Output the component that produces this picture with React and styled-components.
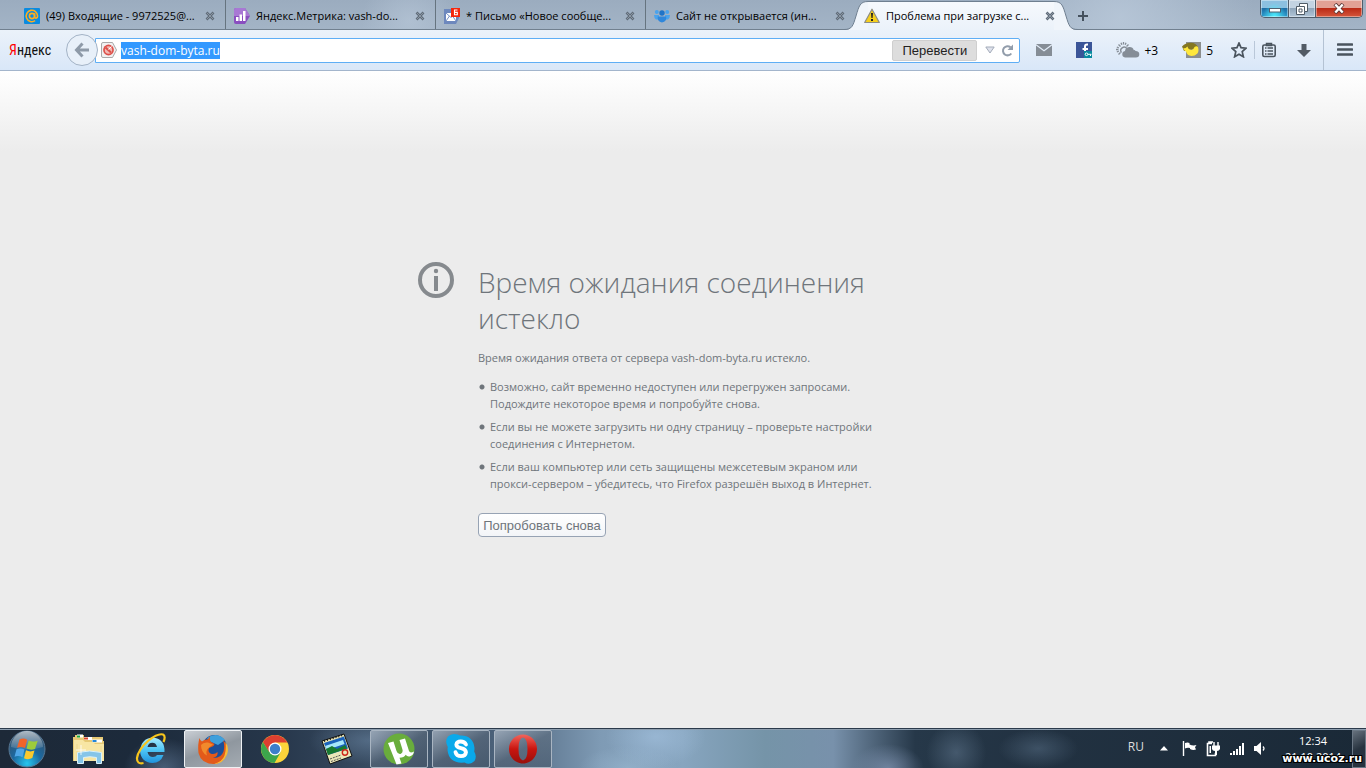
import React, { useEffect, useRef } from 'react';
import styled, { createGlobalStyle } from 'styled-components';

const GlobalStyle = createGlobalStyle`
    *{
        box-sizing: border-box;
    }
    body{
        margin: 0;
        font-family: "Open Sans", "Noto Sans", sans-serif;
        font-size: 12px;
        color: #000000;
    }
    button{
        border: 0;
        padding: 0;
        background: none;
        font: inherit;
        color: inherit;
    }
    svg{
        display: block;
        flex: none;
    }
`;

/* ---------- favicons ---------- */

const MailRuIcon = () => (
    <svg width="16" height="16" viewBox="0 0 16 16">
        <rect width="16" height="16" rx="1" fill="#0a8be0"/>
        <g fill="none" stroke="#ffad1f" strokeWidth="1.6">
            <circle cx="8" cy="8" r="2.6"/>
            <path d="M10.600 5.300v3.500c0 2 3 1.800 3-.9a5.700 5.700 0 1 0-2.500 4.800"/>
        </g>
    </svg>
);

const MetrikaIcon = () => (
    <svg width="16" height="16" viewBox="0 0 16 16">
        <path d="M2 0h9l5 8-5 8H2a2 2 0 0 1-2-2V2a2 2 0 0 1 2-2z" fill="#8a4fc0"/>
        <path d="M2 0h9l5 8H0V2a2 2 0 0 1 2-2z" fill="#a878d4"/>
        <path d="M2 9h2.500v4H2zM5.500 6.500H8V13H5.500zM9 3h2.500v10H9z" fill="#ffffff"/>
    </svg>
);

const LetterIcon = () => (
    <svg width="16" height="16" viewBox="0 0 16 16">
        <path d="M0 1h13l2 2v7l-3 6H0z" fill="#6d88bd"/>
        <path d="M2 5h10v8H2z" fill="#ffffff"/>
        <path d="M2 5l5 4.500L12 5M2 13l3.500-5M12 13L8.500 8" fill="none" stroke="#7590c4"/>
        <rect x="7" width="9" height="9" fill="#f5260c"/>
        <path d="M13.500 2h-3v4.800h2.800V4.400h-2.500" fill="none" stroke="#ffffff" strokeWidth="1.100"/>
    </svg>
);

const PeopleIcon = () => (
    <svg width="16" height="14" viewBox="0 0 16 14">
        <g fill="#4aa3ec">
            <circle cx="2.800" cy="3" r="2"/>
            <circle cx="13.200" cy="3" r="2"/>
            <path d="M0 6h5v4.500H2Q0 9 0 6zM16 6h-5v4.500h3q2-1.500 2-4.500z"/>
        </g>
        <circle cx="8" cy="4" r="2.700" fill="#1f74c8"/>
        <path d="M3.800 7.500h8.400q.8 5-4.200 6-5-1-4.200-6z" fill="#2f87db"/>
    </svg>
);

const WarningIcon = () => (
    <svg width="16" height="16" viewBox="0 0 16 16">
        <path d="M8 1.200L15.300 14.500H.7z" fill="#f6cf1c" stroke="#8d8d86" strokeWidth="1.200" strokeLinejoin="round"/>
        <path d="M7 5h2l-.4 5H7.400zM7 11h2v2H7z" fill="#222222"/>
    </svg>
);

const CloseIcon = () => (
    <svg width="10" height="10" viewBox="0 0 10 10">
        <path d="M1.500 1.500l7 7M8.500 1.500l-7 7" stroke="#5f6b78" strokeWidth="2.600"/>
        <path d="M2 2l6 6M8 2L2 8" stroke="#8b97a4" strokeWidth="1"/>
    </svg>
);

/* ---------- toolbar icons ---------- */

const BackIcon = () => (
    <svg width="16" height="16" viewBox="0 0 16 16">
        <path d="M8.500 1.500L2.500 8l6 6.500M3 8h12" fill="none" stroke="#8e9aa8" strokeWidth="3"/>
    </svg>
);

const BlockedIcon = () => (
    <svg width="16" height="16" viewBox="0 0 16 16">
        <path d="M2 .5h9.500l4 7.500-4 7.500H2A1.500 1.500 0 0 1 .5 14V2A1.500 1.500 0 0 1 2 .5z" fill="#f1f1f1" stroke="#a9a9a9"/>
        <circle cx="7.500" cy="8" r="5.400" fill="#dd4f48"/>
        <circle cx="7.500" cy="8" r="3.700" fill="#f2b9b4"/>
        <path d="M4.500 5.500l5.500 5" stroke="#dd4f48" strokeWidth="2"/>
        <path d="M7.500 7.500l3-3" stroke="#ffffff"/>
    </svg>
);

const ReloadIcon = () => (
    <svg width="13" height="13" viewBox="0 0 13 13">
        <path d="M10.300 9.500A4.600 4.600 0 1 1 9.500 3.200" fill="none" stroke="#929dab" strokeWidth="2"/>
        <path d="M12 .5V6H6.500z" fill="#929dab"/>
    </svg>
);

const EnvelopeIcon = () => (
    <svg width="16" height="12" viewBox="0 0 16 12">
        <path d="M0 0h16L8 6zM0 1.500l8 6 8-6V12H0z" fill="#858d96"/>
    </svg>
);

const FacebookIcon = () => (
    <svg width="16" height="16" viewBox="0 0 16 16">
        <rect width="16" height="16" fill="#3b5598"/>
        <path d="M12 2.500h-1q-2 0-2 2V13M6.500 7H12" fill="none" stroke="#ffffff" strokeWidth="2"/>
        <path d="M8 9h8v7H8z" fill="#088ba0"/>
        <circle cx="10.500" cy="12.300" r="1.300" fill="none" stroke="#ffffff"/>
        <path d="M12 12.300h3.500M14.500 12.500V14" stroke="#ffffff"/>
    </svg>
);

const WeatherIcon = () => (
    <svg width="24" height="16" viewBox="0 0 24 16">
        <g stroke="#858d96" strokeWidth="1.300">
            <path d="M7.500 0v2.500M2.500 2.500l2 2M0 7.500h2.500M2.500 12.500l2-2M12.500 2.500l-2 2M5 .8l.8 2M10 .8l-.8 2M.8 5l2 .8M.8 10l2-.8" fill="none"/>
        </g>
        <path d="M5.500 10.500a3.300 3.300 0 1 1 5.300-4" fill="none" stroke="#858d96" strokeWidth="1.400"/>
        <path d="M9 15.500a3.300 3.300 0 0 1 0-6.500 4.500 4.500 0 0 1 8.800-.8q1-.5 1.800.8 3.700.2 3.700 3.200 0 3.300-3.500 3.300z" fill="#858d96"/>
    </svg>
);

const TrafficIcon = () => (
    <svg width="20" height="16" viewBox="0 0 20 16">
        <rect x="4" width="15" height="16" fill="#8c8f8e"/>
        <path d="M0 4.500Q4 .5 9 .8 14 1 16 5l-5 2-9 2z" fill="#847722"/>
        <path d="M1 6.500q3 0 4.500-2 .5 3 4 3.500 2 0 3-3 2-1.500 3.500 0 1.200 4-.6 6.500Q13 14 9.500 14 5 13.500 4 9.500 2.500 8.500 1 6.500z" fill="#ffe83b"/>
    </svg>
);

const StarIcon = () => (
    <svg width="16" height="16" viewBox="0 0 16 16">
        <path d="M8 1l2 4.700 5 .5-3.800 3.400 1.200 5.200L8 12.200l-4.400 2.600 1.200-5.200L1 6.200l5-.5z" fill="none" stroke="#4a545e" strokeWidth="1.700" strokeLinejoin="miter"/>
    </svg>
);

const ClipboardIcon = () => (
    <svg width="14" height="16" viewBox="0 0 14 16">
        <path d="M4.500 1.500h5v2h-5z" fill="none" stroke="#4a545e" strokeWidth="1.500"/>
        <rect x=".8" y="3" width="12.400" height="11.500" rx="1.500" fill="none" stroke="#4a545e" strokeWidth="1.600"/>
        <path d="M3 6h1.500M5.500 6H11M3 9h1.500M5.500 9H11M3 12h1.500M5.500 12H11" stroke="#4a545e" strokeWidth="1.300"/>
    </svg>
);

const DownloadIcon = () => (
    <svg width="14" height="15" viewBox="0 0 14 15">
        <path d="M4.500 1h5v6H14l-7 7-7-7h4.500z" fill="#525b65"/>
    </svg>
);

const MenuIcon = () => (
    <svg width="16" height="14" viewBox="0 0 16 14">
        <path d="M1 1.500h14M1 6.500h14M1 11.500h14" stroke="#4a545e" strokeWidth="2.600" strokeLinecap="round"/>
    </svg>
);

const InfoIcon = () => (
    <svg width="36" height="36" viewBox="0 0 36 36">
        <circle cx="18" cy="18" r="16" fill="none" stroke="#868a8e" strokeWidth="4"/>
        <circle cx="18" cy="9" r="2.200" fill="#868a8e"/>
        <path d="M16 14h4v15h-4z" fill="#868a8e"/>
    </svg>
);

/* ---------- taskbar icons ---------- */

const StartOrb = () => (
    <svg width="38" height="38" viewBox="0 0 38 38">
        <defs>
            <radialGradient id="orb" cx=".5" cy=".9" r=".8">
                <stop offset="0" stopColor="#27c6ee"/>
                <stop offset=".5" stopColor="#1c69a0"/>
                <stop offset="1" stopColor="#33536f"/>
            </radialGradient>
            <linearGradient id="orbShine" x2="0" y2="1">
                <stop offset="0" stopColor="#ffffff" stopOpacity=".6"/>
                <stop offset="1" stopColor="#ffffff" stopOpacity=".1"/>
            </linearGradient>
        </defs>
        <circle cx="19" cy="19" r="18" fill="url(#orb)" stroke="#587894"/>
        <path d="M3 17a16 16 0 0 1 32 0q-16 5-32 0z" fill="url(#orbShine)"/>
        <path d="M11.500 9.500q4-2 7.700.3L17 18q-4-2-8-.3z" fill="#f0642a"/>
        <path d="M20.700 10.500q4 2 9 .2L27 19q-4.500 1.500-8.500-.5z" fill="#9ccb3b"/>
        <path d="M8.500 19.300q4.300-1.600 8 .2l-2 7.800q-4-2.200-8-.5z" fill="#4fa6e6"/>
        <path d="M18 20.300q4 2 8.500.3L24.300 28q-4.300 2.200-8.300.2z" fill="#fbc92d"/>
    </svg>
);

const ExplorerIcon = () => (
    <svg width="34" height="32" viewBox="0 0 34 32">
        <path d="M1 4h2V2h9v2h19v4h1v20H1z" fill="#e6c975"/>
        <path d="M5 1.500h6v3H5z" fill="#ffffff"/><path d="M5 2.500h3v2H5z" fill="#19a63a"/>
        <path d="M12 4h8v3h-8z" fill="#ffffff"/><path d="M12 4.500h4v2h-4z" fill="#d8452b"/>
        <path d="M20 6.500h10v3H20z" fill="#ffffff"/><path d="M20.500 7h4v2h-4z" fill="#2286d8"/>
        <path d="M2 7h9l2 2h8l2 2h9v17H2z" fill="#f8e6a4"/>
        <path d="M5 11v16M29 13v14" stroke="#eed890"/>
        <path d="M5.500 19.500q12-3 24 0v11h-5v-6q-6.500-1.500-13 0v6h-6z" fill="#86c5e8" stroke="#d9f1fb"/>
        <path d="M9 12v10M4 17h10" stroke="#ffffff" strokeWidth=".8"/>
    </svg>
);

const IeIcon = () => (
    <svg width="32" height="32" viewBox="0 0 32 32">
        <defs>
            <linearGradient id="ie" x2="0" y2="1">
                <stop offset="0" stopColor="#a9ebff"/>
                <stop offset=".5" stopColor="#4dc5f5"/>
                <stop offset="1" stopColor="#1f92dd"/>
            </linearGradient>
        </defs>
        <path d="M29.500 19H12.500q1 5 5.500 5 3 0 4-2h6.500q-3 8-11 8Q6 29.500 5 18 6 5.500 17.500 4.500 30 5.500 29.500 19zm-7.500-5q-.8-4.300-4.700-4.300T12.500 14z" fill="url(#ie)"/>
        <path d="M28.500 9Q31 3 28 1.500 23 0 13.500 7.500 3 17 2 25q-.3 6.500 6.500 5" fill="none" stroke="#f8c51c" strokeWidth="2.200"/>
    </svg>
);

const FirefoxIcon = () => (
    <svg width="32" height="32" viewBox="0 0 32 32">
        <circle cx="17.500" cy="14.500" r="12.500" fill="#1c4f99"/>
        <path d="M10 5Q20-2 28 7l-7 5-9-4z" fill="#3fa0dc"/>
        <path d="M2.500 5q.5 2.500 2.500 3.500Q8 6 10.500 6.500L13 3.500q-.5 3 .5 5l4 2.500-1 2-4.500 2q-1.500 3.500 1.500 5.500 4 1.500 7-1.500 1 4.500-4.500 6 8 .5 10.500-6.500 1.500-6-.5-11.500 5 5 4 12.500-2.500 11-13.500 11.500Q4 30.500 1.500 20 .5 11.500 2.500 5z" fill="#e35a1a"/>
        <path d="M28.500 8.500q4 7 1.500 13Q26 31 17 31q8.500-2.500 10.500-8.500 2-6 1-14z" fill="#f8bb36"/>
        <path d="M4 12q2-3 7-2.500l5 2-4 3q-4 3.500-2 8-6-3-6-10.500z" fill="#f18a2c"/>
    </svg>
);

const ChromeIcon = () => (
    <svg width="28" height="28" viewBox="0 0 28 28">
        <circle cx="14" cy="14" r="14" fill="#fbd43a"/>
        <path d="M14 7.500h12.400L26.100 7A14 14 0 0 0 1.900 7L8 17z" fill="#dd3f30"/>
        <path d="M1.900 7A14 14 0 0 0 13.500 28l6-10.500L8.200 17z" fill="#3da64c"/>
        <circle cx="14" cy="14" r="6.500" fill="#ffffff"/>
        <circle cx="14" cy="14" r="5.200" fill="#3d7fcb"/>
    </svg>
);

const PhotoIcon = () => (
    <svg width="32" height="32" viewBox="0 0 32 32">
        <path d="M1 8L23 1l8 22-22 8z" fill="#ece8b8" stroke="#111111"/>
        <path d="M3 10l20-6.500 4 12L7 22z" fill="#1a62ba"/>
        <path d="M4 13l18-6 1.500 4-9 3-9 2z" fill="#a6e6fa"/>
        <path d="M5 16l6-3 5 3 8-4 2 3.500L7 22z" fill="#197a30"/>
        <path d="M9 26l11-4M10 28.500L20 25" stroke="#555555" strokeDasharray="2 1"/>
        <circle cx="24" cy="19.500" r="2.700" fill="none" stroke="#cc2418" strokeWidth="1.400"/>
        <path d="M3 8l19-6" stroke="#111111" strokeWidth="2" strokeDasharray="1 2"/>
    </svg>
);

const TorrentIcon = () => (
    <svg width="32" height="32" viewBox="0 0 32 32">
        <circle cx="16" cy="16" r="15.500" fill="#69ad3c"/>
        <path d="M5 10l5.500-1.500 3 9.500q1.200 3.500 4 3 3-1 1.800-5L16.500 7 22 5.500l4 12.500q1 2.500 5 .500-.5 4-4.500 5-2.500.3-3.800-1.700-1.500 3-6.200 3l2 5.700-5 1z" fill="#ffffff"/>
    </svg>
);

const SkypeIcon = () => (
    <svg width="32" height="32" viewBox="0 0 32 32">
        <path d="M9 1q4 0 6 1.500Q28 2 29.500 15q0 2-.3 3.500 3 5 .3 9.500-4.500 4.500-10 1.500Q4 31 2.500 17q0-2 .3-3Q-.5 8 3 3.500 5.500 1 9 1z" fill="#0aa9ea"/>
        <path d="M21 11.500Q19.500 8.500 15.700 8.500t-4.400 3q0 2.700 4.700 3.700t5 4q-.5 4-5 4t-5.500-4" fill="none" stroke="#ffffff" strokeWidth="3.800" strokeLinecap="round"/>
    </svg>
);

const OperaIcon = () => (
    <svg width="30" height="32" viewBox="0 0 30 32">
        <defs>
            <linearGradient id="opera" x2="0" y2="1">
                <stop offset="0" stopColor="#f1655c"/>
                <stop offset=".5" stopColor="#c9150f"/>
                <stop offset="1" stopColor="#98100c"/>
            </linearGradient>
        </defs>
        <path fillRule="evenodd" d="M15 1.500C23 1.500 29 8 29 16s-6 14.500-14 14.500S1 24 1 16 7 1.500 15 1.500zm0 3q-4.500 1-4.500 11.500T15 27.500q4.500-1 4.500-11.500T15 4.500z" fill="url(#opera)"/>
    </svg>
);

/* ---------- tray icons ---------- */

const CaretUpIcon = () => (
    <svg width="8" height="5" viewBox="0 0 8 5"><path d="M4 0l4 4.500H0z" fill="#ffffff"/></svg>
);

const FlagIcon = () => (
    <svg width="15" height="15" viewBox="0 0 15 15">
        <path d="M1.500 0v15" stroke="#ffffff" strokeWidth="1.400"/>
        <path d="M3 2q2.500-1 4.500 0v1.500q3.500 1.500 7 .5l-1.500 2.300L14 8.500q-3 1-6-.5V7Q5 6.500 3 7.500z" fill="#ffffff"/>
    </svg>
);

const PowerIcon = () => (
    <svg width="15" height="16" viewBox="0 0 15 16">
        <path d="M6 2.500H1.500v12h8V12M3 2.500V1h4" fill="none" stroke="#ffffff" strokeWidth="1.600"/>
        <path d="M3.500 5H5v7H3.500z" fill="#ffffff"/>
        <path d="M8 1v4M12 1v4" stroke="#ffffff" strokeWidth="1.400"/>
        <path d="M6 4.500h8V8q-1 2-3 2v4H9v-4Q6.500 10 6 8z" fill="#ffffff"/>
    </svg>
);

const SignalIcon = () => (
    <svg width="15" height="12" viewBox="0 0 15 12">
        <path d="M0 10h2v2H0zM3 8h2v4H3zM6 6h2v6H6zM9 3h2v9H9zM12 0h2v12h-2z" fill="#ffffff"/>
    </svg>
);

const SpeakerIcon = () => (
    <svg width="12" height="13" viewBox="0 0 12 13">
        <path d="M0 4h2.500L7 0v13L2.500 9H0z" fill="#ffffff"/>
        <path d="M9 4.500q2 2 0 4" fill="none" stroke="#ffffff" strokeWidth="1.200"/>
    </svg>
);

/* ---------- data ---------- */

const tabs = [
    { title: '(49) Входящие - 9972525@...', icon: <MailRuIcon/> },
    { title: 'Яндекс.Метрика: vash-do...', icon: <MetrikaIcon/> },
    { title: '* Письмо «Новое сообще...', icon: <LetterIcon/> },
    { title: 'Сайт не открывается (ин...', icon: <PeopleIcon/> },
    { title: 'Проблема при загрузке с...', icon: <WarningIcon/>, active: true },
];

const apps = [
    { name: 'Проводник', icon: <ExplorerIcon/> },
    { name: 'Internet Explorer', icon: <IeIcon/> },
    { name: 'Firefox', icon: <FirefoxIcon/>, state: 'active' },
    { name: 'Chrome', icon: <ChromeIcon/> },
    { name: 'Фото', icon: <PhotoIcon/> },
    { name: 'uTorrent', icon: <TorrentIcon/>, state: 'open' },
    { name: 'Skype', icon: <SkypeIcon/>, state: 'open' },
    { name: 'Opera', icon: <OperaIcon/>, state: 'open' },
];

function App() {
    const urlRef = useRef(null);

    useEffect(() => {
        urlRef.current.focus();
        urlRef.current.select();
    }, []);

    return (
        <Screen>
            <GlobalStyle/>
            <TabStrip>
                <TabList>
                    {tabs.map((tab, index) => (
                        <Tab key={tab.title} $active={tab.active} $divided={index < 3}>
                            {tab.active && <TabShape/>}
                            <TabIcon>{tab.icon}</TabIcon>
                            <TabTitle>{tab.title}</TabTitle>
                            <TabClose aria-label="Закрыть вкладку"><CloseIcon/></TabClose>
                        </Tab>
                    ))}
                    <NewTab aria-label="Новая вкладка">
                        <svg width="12" height="12" viewBox="0 0 12 12">
                            <path d="M6 1v10M1 6h10" stroke="#45515e" strokeWidth="2"/>
                        </svg>
                    </NewTab>
                </TabList>
                <WindowControls>
                    <WindowButton aria-label="Свернуть" $kind="min">
                        <svg width="12" height="6" viewBox="0 0 12 6">
                            <rect x=".5" y="1.500" width="11" height="3.500" fill="#ffffff" stroke="#51606e"/>
                        </svg>
                    </WindowButton>
                    <WindowButton aria-label="Развернуть">
                        <svg width="12" height="12" viewBox="0 0 12 12">
                            <path d="M3.500.5h8v8h-3v3h-8v-8h3z" fill="#ffffff" stroke="#4f5b66"/>
                            <path d="M3.500 3.500h5v5M3 6h3v3H3z" fill="none" stroke="#4f5b66"/>
                        </svg>
                    </WindowButton>
                    <WindowButton aria-label="Закрыть" $kind="close">
                        <svg width="12" height="11" viewBox="0 0 12 11">
                            <path d="M2 1l8 9M10 1L2 10" stroke="#5d3836" strokeWidth="4"/>
                            <path d="M2.300 1.500l7.400 8M9.700 1.500l-7.400 8" stroke="#ffffff" strokeWidth="2.400"/>
                        </svg>
                    </WindowButton>
                </WindowControls>
            </TabStrip>

            <Toolbar>
                <YandexLogo href="#"><span>Я</span>ндекс</YandexLogo>
                <BackButton aria-label="Назад"><BackIcon/></BackButton>
                <UrlBar>
                    <BlockedIcon/>
                    <UrlInput ref={urlRef} aria-label="Адрес" defaultValue="vash-dom-byta.ru" spellCheck="false"/>
                    <TranslateButton>Перевести</TranslateButton>
                    <UrlActions>
                        <button aria-label="История">
                            <svg width="10" height="8" viewBox="0 0 10 8">
                                <path d="M.8 1h8.400L5 7z" fill="#dfe2ec" stroke="#a3abb9"/>
                            </svg>
                        </button>
                        <button aria-label="Обновить"><ReloadIcon/></button>
                    </UrlActions>
                </UrlBar>
                <Addons>
                    <button aria-label="Почта"><EnvelopeIcon/></button>
                    <button aria-label="Facebook"><FacebookIcon/></button>
                    <AddonButton><WeatherIcon/>+3</AddonButton>
                    <AddonButton><TrafficIcon/>5</AddonButton>
                </Addons>
                <Bookmarks>
                    <button aria-label="В закладки"><StarIcon/></button>
                    <ThinLine/>
                    <button aria-label="Закладки"><ClipboardIcon/></button>
                </Bookmarks>
                <DownloadButton aria-label="Загрузки"><DownloadIcon/></DownloadButton>
                <MenuButton aria-label="Меню"><MenuIcon/></MenuButton>
            </Toolbar>

            <Page>
                <ErrorBox>
                    <InfoIcon/>
                    <ErrorBody>
                        <Title>Время ожидания соединения истекло</Title>
                        <Lead>Время ожидания ответа от сервера vash-dom-byta.ru истекло.</Lead>
                        <Hints>
                            <li>Возможно, сайт временно недоступен или перегружен запросами.<br/>Подождите некоторое время и попробуйте снова.</li>
                            <li>Если вы не можете загрузить ни одну страницу – проверьте настройки<br/>соединения с Интернетом.</li>
                            <li>Если ваш компьютер или сеть защищены межсетевым экраном или<br/>прокси-сервером – убедитесь, что Firefox разрешён выход в Интернет.</li>
                        </Hints>
                        <RetryButton>Попробовать снова</RetryButton>
                    </ErrorBody>
                </ErrorBox>
            </Page>

            <Taskbar>
                <StartButton aria-label="Пуск"><StartOrb/></StartButton>
                <AppList>
                    {apps.map((app) => (
                        <AppButton key={app.name} aria-label={app.name} $state={app.state}>{app.icon}</AppButton>
                    ))}
                </AppList>
                <Tray>
                    <Language>RU</Language>
                    <CaretUpIcon/>
                    <TrayIcons>
                        <FlagIcon/>
                        <PowerIcon/>
                        <SignalIcon/>
                        <SpeakerIcon/>
                    </TrayIcons>
                    <Clock>
                        <span>12:34</span>
                        <span>21.10.2014</span>
                    </Clock>
                    <ShowDesktop aria-label="Показать рабочий стол"/>
                </Tray>
                <Watermark>www.ucoz.ru</Watermark>
            </Taskbar>
        </Screen>
    );
}

export default App;

const Screen = styled.div`
    min-height: 100vh;
    display: flex;
    flex-direction: column;
`;

const TabStrip = styled.div`
    display: flex;
    justify-content: space-between;
    height: 30px;
    padding: 0 3px 0 16px;
    border-bottom: 1px solid #71808f;
    background:
        radial-gradient(circle at 82% 60%, rgba(190, 205, 222, .7), transparent 12%),
        radial-gradient(circle at 30% 70%, rgba(190, 205, 222, .5), transparent 5%),
        linear-gradient(#9bacbf, #a3b4c6);
`;

const TabList = styled.div`
    display: flex;
    flex: 1;
    min-width: 0;
`;

const Tab = styled.div`
    position: relative;
    display: flex;
    align-items: center;
    flex: 0 1 210px;
    min-width: 0;
    height: ${({ $active }) => ($active ? '30px' : '29px')};
    padding: 2px 10px 0 8px;
    z-index: ${({ $active }) => ($active ? 1 : 0)};
    border-right: 1px solid ${({ $divided }) => ($divided ? '#66747f' : 'transparent')};
`;

const TabIcon = styled.span`
    position: relative;
    margin-right: 6px;
`;

const TabTitle = styled.span`
    position: relative;
    flex: 1;
    min-width: 0;
    overflow: hidden;
    white-space: nowrap;
    font-size: 11px;
    line-height: 16px;
`;

const TabClose = styled.button`
    position: relative;
`;

/* body of the selected tab, its curved feet reach over the neighbours */
const TabShapeBody = styled.div`
    position: absolute;
    inset: 0 -13px 0 -12px;
    display: flex;
`;

const TabMiddle = styled.div`
    flex: 1;
    margin-top: 1px;
    border-top: 1px solid #6f7f90;
    background: linear-gradient(#f6f9fd, #ebf2fa);
`;

function TabShape() {
    return (
        <TabShapeBody>
            <svg width="24" height="30" viewBox="0 0 24 30">
                <path d="M0 30C8 30 9 26 12 16S16 1.500 24 1.500V30z" fill="#f0f5fb"/>
                <path d="M0 29.500C8 29.500 9 26 12 16S16 1.500 24 1.500" fill="none" stroke="#6f7f90"/>
            </svg>
            <TabMiddle/>
            <svg width="24" height="30" viewBox="0 0 24 30">
                <path d="M24 30C16 30 15 26 12 16S8 1.500 0 1.500V30z" fill="#f0f5fb"/>
                <path d="M24 29.500C16 29.500 15 26 12 16S8 1.500 0 1.500" fill="none" stroke="#6f7f90"/>
            </svg>
        </TabShapeBody>
    );
}

const NewTab = styled.button`
    width: 34px;
    padding-top: 2px;
    display: flex;
    align-items: center;
    justify-content: center;
`;

const WindowControls = styled.div`
    display: flex;
    height: 18px;
    border: 1px solid #4f5d6b;
    border-top: 0;
    border-radius: 0 0 5px 5px;
    overflow: hidden;
`;

const controlFill = {
    min: 'radial-gradient(ellipse at 50% 100%, #4ff0ff, transparent 60%), linear-gradient(#8cc0e0 45%, #1e6ea6 50%, #2f9fd0)',
    close: 'linear-gradient(#e2a195 45%, #bb2b17 50%, #d5573c)',
    plain: 'linear-gradient(#c3d3e2 45%, #90a6bb 50%, #b2c6d8)',
};

const WindowButton = styled.button`
    width: ${({ $kind }) => ($kind === 'close' ? '47px' : '27px')};
    display: flex;
    align-items: center;
    justify-content: center;
    padding-top: ${({ $kind }) => ($kind === 'min' ? '3px' : '0')};
    background: ${({ $kind }) => controlFill[$kind || 'plain']};
    box-shadow: inset 0 0 0 1px rgba(255, 255, 255, .4);
    & + &{
        border-left: 1px solid #4f5d6b;
    }
`;

const Toolbar = styled.div`
    display: flex;
    align-items: center;
    height: 41px;
    padding: 0 13px 0 9px;
    border-bottom: 1px solid #a3b5cc;
    background: linear-gradient(#ebf2fa, #d9e7f8);
`;

const YandexLogo = styled.a`
    width: 57px;
    font-family: "Liberation Sans Narrow", "Roboto Condensed", Roboto, sans-serif;
    font-size: 14px;
    line-height: 20px;
    color: #111111;
    text-decoration: none;
    span{
        color: #ff0000;
    }
`;

const BackButton = styled.button`
    flex: none;
    width: 32px;
    height: 32px;
    margin-right: -3px;
    display: flex;
    align-items: center;
    justify-content: center;
    border: 1px solid #a3b3c6;
    border-radius: 50%;
    background: #e8f0f9;
    z-index: 1;
`;

const UrlBar = styled.div`
    flex: 1;
    min-width: 0;
    height: 25px;
    display: flex;
    align-items: center;
    gap: 4px;
    padding: 0 5px;
    border: 1px solid #5eaef5;
    border-radius: 0 2px 2px 0;
    background: #ffffff;
`;

const UrlInput = styled.input`
    flex: 1;
    min-width: 0;
    padding: 0;
    border: 0;
    outline: 0;
    background: transparent;
    font-family: inherit;
    font-size: 12px;
    line-height: 17px;
    &::selection{
        background: #3399ff;
        color: #ffffff;
    }
`;

const TranslateButton = styled.button`
    width: 85px;
    height: 21px;
    border: 1px solid #cfcfcf;
    border-radius: 2px;
    background: #dddddd;
    font-family: "Liberation Sans", sans-serif;
    font-size: 13px;
    color: #222222;
`;

const UrlActions = styled.div`
    display: flex;
    align-items: center;
    gap: 6px;
    padding-left: 4px;
`;

const Addons = styled.div`
    display: flex;
    align-items: center;
    gap: 24px;
    padding: 0 18px 0 16px;
`;

const AddonButton = styled.button`
    display: flex;
    align-items: center;
    gap: 4px;
`;

const Bookmarks = styled.div`
    display: flex;
    align-items: center;
    gap: 7px;
`;

const ThinLine = styled.span`
    width: 1px;
    height: 18px;
    background: #b9c7d8;
`;

const DownloadButton = styled.button`
    padding: 0 12px 0 21px;
`;

const MenuButton = styled.button`
    height: 40px;
    padding-left: 13px;
    border-left: 1px solid #b4c2d3;
`;

const Page = styled.main`
    flex: 1;
    display: flex;
    align-items: center;
    justify-content: center;
    background: linear-gradient(#ffffff, #ececec 80px);
`;

const ErrorBox = styled.section`
    display: flex;
    align-items: flex-start;
    gap: 24px;
    width: 530px;
    color: #6f757b;
`;

const ErrorBody = styled.div`
    flex: 1;
    padding-top: 2px;
    font-size: 11px;
    line-height: 17px;
    white-space: nowrap;
`;

const Title = styled.h1`
    margin: 0;
    max-width: 410px;
    font-size: 28px;
    font-weight: 300;
    line-height: 36px;
    white-space: normal;
`;

const Lead = styled.p`
    margin: 13px 0 12px;
`;

const Hints = styled.ul`
    margin: 0 0 21px;
    padding: 0;
    list-style: none;
    li{
        margin-bottom: 6px;
        padding-left: 12px;
        background: radial-gradient(circle at 4px 9px, #6f757b 2px, transparent 3px);
    }
`;

const RetryButton = styled.button`
    width: 128px;
    height: 24px;
    border: 1px solid #97a3b4;
    border-radius: 4px;
    background: linear-gradient(#ffffff, #f3f5f8);
    font-family: "Liberation Sans", sans-serif;
    font-size: 13px;
`;

const Taskbar = styled.footer`
    position: relative;
    display: flex;
    align-items: center;
    height: 40px;
    border-top: 1px solid #2b3a4b;
    box-shadow: inset 0 1px 0 #8c9dae;
    background:
        radial-gradient(ellipse 40px 30px at 12% 100%, rgba(100, 125, 155, .6), transparent),
        radial-gradient(ellipse 60px 24px at 27% 30%, rgba(110, 138, 168, .5), transparent),
        radial-gradient(ellipse 50px 30px at 48% 20%, rgba(165, 195, 225, .6), transparent),
        radial-gradient(ellipse 50px 22px at 46% 100%, rgba(160, 190, 215, .5), transparent),
        radial-gradient(ellipse 36px 24px at 65% 100%, rgba(130, 150, 180, .7), transparent),
        radial-gradient(ellipse 30px 30px at 70% 60%, rgba(90, 112, 134, .6), transparent),
        radial-gradient(ellipse 40px 20px at 76% 50%, rgba(80, 102, 124, .6), transparent),
        linear-gradient(90deg, #1d2938 0, #1c2a3b 10%, #26364a 20%, #3a4e64 28%, #4a6078 36%, #7f9bb5 44%, #87a5bf 50%, #7594a8 56%, #7891ab 61%, #263849 67%, #223242 75%, #1a2937 100%);
`;

const StartButton = styled.button`
    margin: 0 14px 0 8px;
`;

const AppList = styled.div`
    display: flex;
    gap: 4px;
    flex: 1;
`;

const stateFill = {
    active: 'linear-gradient(160deg, #c9ced4, #8f979f 50%, #a4abb2)',
    open: 'linear-gradient(150deg, rgba(190, 200, 212, .65), rgba(90, 105, 122, .6) 50%, rgba(70, 86, 104, .6))',
};

const AppButton = styled.button`
    width: 58px;
    height: 38px;
    display: flex;
    align-items: center;
    justify-content: center;
    border: 1px solid ${({ $state }) => ($state === 'active' ? '#eef1f4' : $state ? '#a9b5c2' : 'transparent')};
    border-radius: 2px;
    background: ${({ $state }) => stateFill[$state] || 'none'};
`;

const Tray = styled.div`
    display: flex;
    align-items: center;
    height: 100%;
    color: #ffffff;
`;

const Language = styled.span`
    margin-right: 16px;
    padding-bottom: 4px;
    color: #dddddd;
`;

const TrayIcons = styled.div`
    display: flex;
    align-items: center;
    gap: 9px;
    margin-left: 14px;
`;

const Clock = styled.time`
    width: 78px;
    margin-left: 8px;
    display: flex;
    flex-direction: column;
    align-items: center;
    font-size: 11px;
    line-height: 16px;
`;

const ShowDesktop = styled.button`
    width: 14px;
    height: 38px;
    border: 1px solid #6b7885;
    background: linear-gradient(150deg, #66717d, #27333f 50%);
`;

const Watermark = styled.div`
    position: absolute;
    right: 4px;
    bottom: 2px;
    font-family: "DejaVu Sans", sans-serif;
    font-size: 11px;
    font-weight: bold;
    line-height: 14px;
    color: #ffffff;
    text-shadow: 1px 0 #000000, -1px 0 #000000, 0 1px #000000, 0 -1px #000000, 1px 1px #000000, -1px -1px #000000, 1px -1px #000000, -1px 1px #000000;
`;
